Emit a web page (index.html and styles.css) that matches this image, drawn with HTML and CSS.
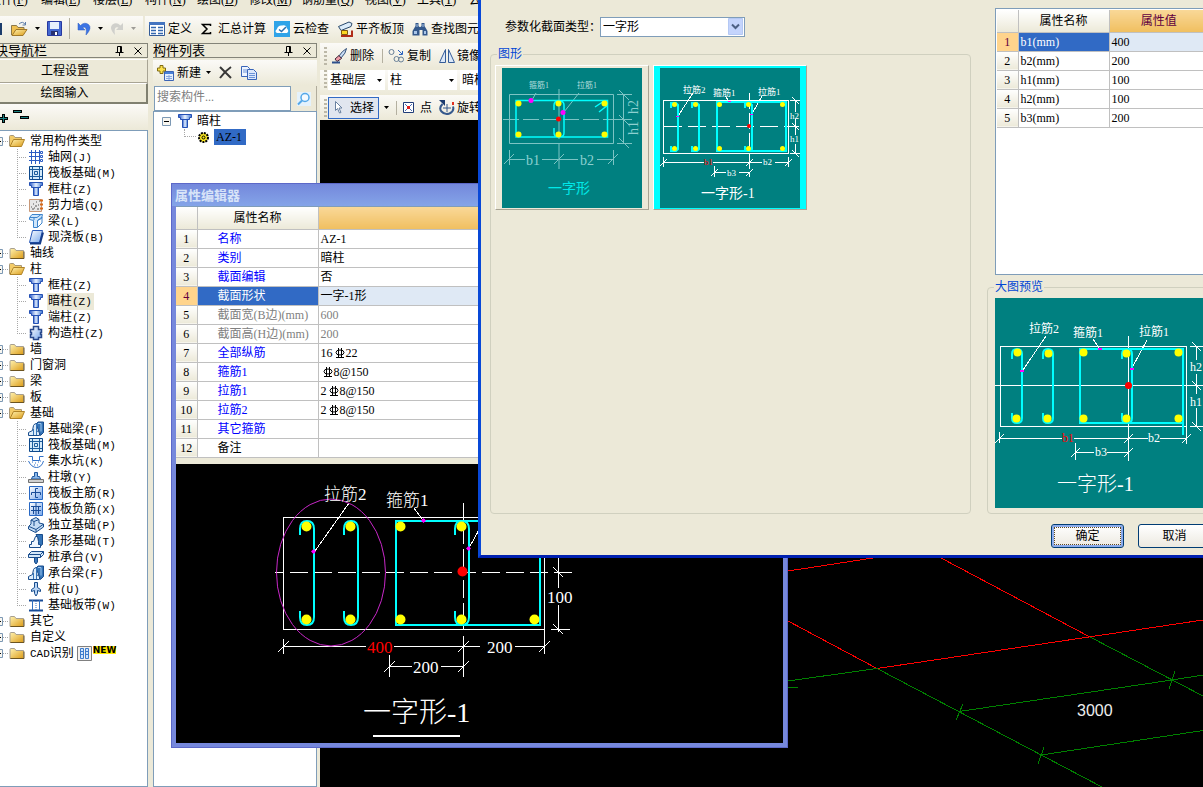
FILE: index.html
```html
<!DOCTYPE html>
<html lang="zh-CN">
<head>
<meta charset="utf-8">
<title>钢筋算量</title>
<link rel="stylesheet" href="styles.css">
</head>
<body>
<svg class="sprite" width="0" height="0" aria-hidden="true">
  <defs>
    <linearGradient id="gold" x1="0" y1="0" x2="1" y2="1"><stop offset="0" stop-color="#fff2b0"/><stop offset="1" stop-color="#dc9c18"/></linearGradient>
    <linearGradient id="steel" x1="0" y1="0" x2="1" y2="0"><stop offset="0" stop-color="#2456c8"/><stop offset=".5" stop-color="#e8f2ff"/><stop offset="1" stop-color="#3c74d0"/></linearGradient>
    <linearGradient id="sky" x1="0" y1="0" x2="1" y2="1"><stop offset="0" stop-color="#fff"/><stop offset="1" stop-color="#78a8ec"/></linearGradient>
  </defs>
  <symbol id="folder" viewBox="0 0 16 16"><path d="M1 4.500q0-1 1-1h3.500l1.500 2h7.500v8H1z" fill="url(#gold)" stroke="#a8a090"/><path d="M1.500 13.500h13.500v-7" fill="none" stroke="#6c5420"/></symbol>
  <symbol id="folder-open" viewBox="0 0 16 16"><path d="M.5 13V3.500q0-1 1-1h3l1.500 2h6.500v2" fill="#f4cc68" stroke="#a89878"/><path d="M1 13.500 4.500 6.500h11L12.500 13.500z" fill="url(#gold)" stroke="#b08428"/></symbol>
  <symbol id="col" viewBox="0 0 16 16"><path d="M1.500 1.500h13v3h-2v2h-9v-2h-2z" fill="url(#steel)" stroke="#2450b4"/><path d="M5.500 6.500h5v8h-5z" fill="url(#steel)" stroke="#2450b4"/></symbol>
  <symbol id="grid" viewBox="0 0 16 16"><path d="M3.500 1v14M7.500 1v14M11.500 1v14M1 3.500h14M1 7.500h14M1 11.500h14" stroke="#2c5cc4" fill="none"/><path d="M12.500 2.500h2v2h-2zM12.500 6.500h2v2h-2zM12.500 10.500h2v2h-2z" fill="#fff" stroke="#2c5cc4"/></symbol>
  <symbol id="raft" viewBox="0 0 16 16"><path d="M1.500 1.500h13v13h-13z" fill="#d4eafa" stroke="#0c488c"/><path d="M4.500 4.500h7v7h-7zM4.500 2v12M11.500 2v12M2 4.500h12M2 11.500h12M6.500 6.500h3v3h-3z" fill="none" stroke="#1c5c9c"/></symbol>
  <symbol id="wall" viewBox="0 0 16 16"><path d="M1.500 2.500h12v12h-12z" fill="#e8e8e8" stroke="#c89878"/><path d="M3 10h1M5 7h1M8 5h1M7 9h2M4 12h2M9 12h2M10 8h1M11 4h1M6 11h1" stroke="#555"/><path d="M12 3.500h3M12 7.500h3M12 11.500h3" stroke="#d86818" stroke-width="2"/></symbol>
  <symbol id="beam" viewBox="0 0 16 16"><path d="M1.500 4.500 4 1.500h10.500l-1 4-4 2v7h-4v-7l-4-1z" fill="#cfe6fb" stroke="#3c84cc"/><path d="M9.500 7.500 14 4v6l-4 4M2 4.500h7l4-3M6 4v3" fill="none" stroke="#3c84cc"/></symbol>
  <symbol id="slab" viewBox="0 0 16 16"><path d="M4.500 1.500h10l-3 12h-10z" fill="url(#sky)" stroke="#2858b8"/><path d="M2 14.500h10l3-11" fill="none" stroke="#143c88" stroke-width="2"/></symbol>
  <symbol id="struct" viewBox="0 0 16 16"><path d="M5.500 1.500h5v3h3v3h-1v2h1v3h-3v2h-5v-2h-3v-3h1v-2h-1v-3h3z" fill="url(#sky)" stroke="#28488c" stroke-width="1.500"/></symbol>
  <symbol id="fbeam" viewBox="0 0 16 16"><path d="M8 3l2-2h5.500v10.500l-3 3z" fill="#3474b8" stroke="#184c8c"/><path d="M10 2.500h3v8" fill="none" stroke="#9cc4ec"/><path d="M.5 14.500v-3l4-2 1-5q1-2 3-2v7l3 2v3z" fill="#dcecfa" stroke="#184c8c"/><path d="M5.500 14V8M8.500 14V3" stroke="#3474b8"/></symbol>
  <symbol id="pit" viewBox="0 0 16 16"><path d="M.5 3.500h4v4h7v-4h4M.5 8q3 6.500 8 6.500t7-6.500" fill="none" stroke="#3070c8"/><path d="M4 9h1M7 10h1M10 9h1M6 12h1M9 12h1M12 8h1" stroke="#3070c8"/></symbol>
  <symbol id="pier" viewBox="0 0 16 16"><path d="M6.500 3.500h3v4h2l1 2.500h-9l1-2.500h2z" fill="#8cb8e8" stroke="#2058a0"/><path d="M.5 10.500h15v3H.5z" fill="#d0d0d0" stroke="#707070"/></symbol>
  <symbol id="rmain" viewBox="0 0 16 16"><path d="M1.500 1.500h13v13h-13z" fill="url(#sky)" stroke="#2868c4"/><path d="M3.500 10V7.500h9V10M10 3.500H7.500v9H10" fill="none" stroke="#184c98"/></symbol>
  <symbol id="rneg" viewBox="0 0 16 16"><path d="M1.500 1.500h13v13h-13z" fill="url(#sky)" stroke="#2868c4"/><path d="M8 2v12M3 5.500h10M3 9.500h10M5.500 5v8M10.500 5v8" fill="none" stroke="#184c98"/></symbol>
  <symbol id="indep" viewBox="0 0 16 16"><path d="M.5 9.500 3 7V3l5-2.500 3 2V6l4.500 1v3l-8 5.500-7-3.500z" fill="#c4dcf4" stroke="#184c8c"/><path d="M1 9.500l7 3 7-5M3 3l3 1.500 5-2M6 4.500V9M8 12.500v3" fill="none" stroke="#184c8c"/></symbol>
  <symbol id="strip" viewBox="0 0 16 16"><path d="M8 1.500h6.500v10l-4 3V7z" fill="#3474b8" stroke="#184c8c"/><path d="M1.500 14.500v-3h2v-3h2l2-5h2l1 5v3h2v3z" fill="#eef6ff" stroke="#184c8c"/></symbol>
  <symbol id="cap" viewBox="0 0 16 16"><path d="M6.500 8h3v5L8 15l-1.500-2z" fill="#3c78bc" stroke="#184c8c"/><path d="M.5 8.500v-3l3-3h12v3l-3 3z" fill="#d4e8fa" stroke="#184c8c"/><path d="M.5 5.500h12l3-3M12.500 5.500v3" fill="none" stroke="#184c8c"/></symbol>
  <symbol id="pile" viewBox="0 0 16 16"><path d="M6.500 1.500h3v5l3 2v2l-3-1v3L8 15l-1.500-2.500v-3l-3 1v-2l3-2z" fill="#b8d4f4" stroke="#184c8c"/></symbol>
  <symbol id="band" viewBox="0 0 16 16"><path d="M1 3.500h14M1 13.500h14" stroke="#184c98" stroke-width="2"/><path d="M4.500 3v10M11.500 3v10" stroke="#3070c0"/><path d="M8 4v9" stroke="#3070c0" stroke-dasharray="1 1"/></symbol>
  <symbol id="drop" viewBox="0 0 5 3"><path d="M0 0h5L2.500 3z" fill="#000"/></symbol>
  <symbol id="expander" viewBox="0 0 9 9"><path d="M.5.5h8v8h-8z" fill="#f8f6f0" stroke="#7c98b4"/><path d="M2 4.500h5" stroke="#000"/></symbol>
  <symbol id="pin" viewBox="0 0 9 10"><path d="M2.500 6V.5h4V6M5.500 1v5M.5 6.500h8M4.500 7v3" fill="none" stroke="#000"/></symbol>
  <symbol id="close" viewBox="0 0 8 8"><path d="M.5.5l7 7M7.500.5l-7 7" stroke="#000"/></symbol>
  <symbol id="rebar" viewBox="0 0 12 12"><ellipse cx="6" cy="5.500" rx="4" ry="2.500" fill="none" stroke="#000"/><path d="M4.500 1v9M7.500 1v9M2 10.500h8" fill="none" stroke="#000"/></symbol>
</svg>

<div class="app">
  <nav class="menubar" aria-label="菜单">
    <a href="#">文件(<u>F</u>)</a><a href="#">编辑(<u>E</u>)</a><a href="#">楼层(<u>L</u>)</a><a href="#">构件(<u>N</u>)</a><a href="#">绘图(<u>D</u>)</a><a href="#">修改(<u>M</u>)</a><a href="#" class="wide">钢筋量(<u>Q</u>)</a><a href="#">视图(<u>V</u>)</a><a href="#">工具(<u>T</u>)</a><a href="#">云应用(<u>Y</u>)</a>
  </nav>

  <div class="topbars">
    <div class="bar file-bar">
      <svg class="sliver" width="2" height="12"><path d="M0 0h2v12H0z" fill="#1c3c6c"/></svg>
      <button class="tool" aria-label="打开"><svg width="17" height="16"><path d="M.5 14V4.500h5l1.500 2h6V8" fill="#f0c050" stroke="#8c7848"/><path d="M1 14.500 5 8.500h11L12 14.500z" fill="url(#gold)" stroke="#a07828"/><path d="M8 3q4-3.500 6 .5M14.500 1v3h-3" fill="none" stroke="#5c7ca8"/></svg></button>
      <svg class="arrow" width="5" height="3"><use href="#drop"/></svg>
      <button class="tool" aria-label="保存"><svg width="15" height="15"><path d="M.5.5h14v14h-14z" fill="#4468d0" stroke="#2838a0"/><path d="M3 1h9v7H3z" fill="#e8f0fc"/><path d="M4 10h7v4H4z" fill="#283070"/><path d="M8 11h2v3H8z" fill="#fff"/></svg></button>
      <i class="sep"></i>
      <button class="tool" aria-label="撤销"><svg width="14" height="14"><path d="M1 1v7h7L5.500 5.500Q10.500 3.500 9 13 15.500 6 11.500 2.500 7.500-.5 3.500 3.500z" fill="#3c74e4" stroke="#2858c0" stroke-width=".5"/></svg></button>
      <svg class="arrow" width="5" height="3"><use href="#drop"/></svg>
      <button class="tool" aria-label="重做" disabled><svg width="14" height="14"><path d="M13 1v7H6l2.500-2.500Q3.500 3.500 5 13-1.500 6 2.500 2.500q4-3 8 1z" fill="#d0d0cc"/></svg></button>
      <svg class="arrow dim-arrow" width="5" height="3"><use href="#drop"/></svg>
    </div>
    <div class="bar main-bar">
      <button class="tool"><svg width="16" height="14"><path d="M.5.5h15v13H.5z" fill="#fff" stroke="#345c98"/><path d="M0 0h16v3H0z" fill="#4474c0"/><path d="M2 5.500h5M2 8.500h5M2 11.500h5M9 5.500h5M9 8.500h5M9 11.500h5" stroke="#3468b0" stroke-width="1.500"/></svg>定义</button>
      <button class="tool"><svg width="13" height="12"><path d="M10.500 3V1.500h-8L7 6 2.500 10.500h8V9" fill="none" stroke="#000" stroke-width="1.500"/></svg>汇总计算</button>
      <button class="tool"><svg width="16" height="16"><path d="M0 0h16v16H0z" fill="#30a4e8"/><path d="M3 12Q0 10.500 3 8q1-4 5-3.500Q12 3 13 7.500q2.500 2.500 0 4.500z" fill="#fff"/><path d="M5 8.500l2.500 2L12 6" fill="none" stroke="#2870b0" stroke-width="1.500"/></svg>云检查</button>
      <button class="tool"><svg width="16" height="16"><path d="M1.500 5.500 12 1l3 1.500-1 3-10 4z" fill="#dcecfa" stroke="#28486c"/><path d="M4.500 9.500h6v4h-6z" fill="#fcd820" stroke="#805810"/><path d="M4 15h11V9.500" fill="none" stroke="#b02c18" stroke-width="2"/></svg>平齐板顶</button>
      <button class="tool"><svg width="16" height="14"><path d="M3.500 1h3v3l1 1h1l1-1V1h3v3l3 5v4.500h-5V8h-3v5.500h-7V9l3-5z" fill="#34588c"/><path d="M2 9h3v3H2zM12 9h2v3h-2zM4.500 2h1v3h-1zM10.500 2h1v3h-1z" fill="#a8c4e8"/></svg>查找图元</button>
    </div>
  </div>

  <div class="work">
    <aside class="nav">
      <header class="cap"><span class="nav-title">模块导航栏</span><svg width="9" height="10"><use href="#pin"/></svg><svg width="8" height="8"><use href="#close"/></svg></header>
      <button class="stack">工程设置</button>
      <button class="stack sunk">绘图输入</button>
      <div class="fold"><svg width="32" height="14" shape-rendering="crispEdges"><path d="M0 7h4V4h2v3h3v2H6v3H4V9H0z" fill="#188080" stroke="#000"/><path d="M15.500.5h8v2h-8zM22.500 6.500h8v2h-8z" fill="#188080" stroke="#000"/></svg></div>
      <ul class="tree">
        <li><div class="row"><svg class="ex"><use href="#expander"/></svg><i></i><svg class="ic"><use href="#folder-open"/></svg><span>常用构件类型</span></div>
          <ul>
            <li><svg class="ic"><use href="#grid"/></svg><span>轴网<kbd>(J)</kbd></span></li>
            <li><svg class="ic"><use href="#raft"/></svg><span>筏板基础<kbd>(M)</kbd></span></li>
            <li><svg class="ic"><use href="#col"/></svg><span>框柱<kbd>(Z)</kbd></span></li>
            <li><svg class="ic"><use href="#wall"/></svg><span>剪力墙<kbd>(Q)</kbd></span></li>
            <li><svg class="ic"><use href="#beam"/></svg><span>梁<kbd>(L)</kbd></span></li>
            <li><svg class="ic"><use href="#slab"/></svg><span>现浇板<kbd>(B)</kbd></span></li>
          </ul></li>
        <li><div class="row"><svg class="ex"><use href="#expander"/></svg><i></i><svg class="ic"><use href="#folder"/></svg><span>轴线</span></div></li>
        <li><div class="row"><svg class="ex"><use href="#expander"/></svg><i></i><svg class="ic"><use href="#folder-open"/></svg><span>柱</span></div>
          <ul>
            <li><svg class="ic"><use href="#col"/></svg><span>框柱<kbd>(Z)</kbd></span></li>
            <li><svg class="ic"><use href="#col"/></svg><span class="on">暗柱<kbd>(Z)</kbd></span></li>
            <li><svg class="ic"><use href="#col"/></svg><span>端柱<kbd>(Z)</kbd></span></li>
            <li><svg class="ic"><use href="#struct"/></svg><span>构造柱<kbd>(Z)</kbd></span></li>
          </ul></li>
        <li><div class="row"><svg class="ex"><use href="#expander"/></svg><i></i><svg class="ic"><use href="#folder"/></svg><span>墙</span></div></li>
        <li><div class="row"><svg class="ex"><use href="#expander"/></svg><i></i><svg class="ic"><use href="#folder"/></svg><span>门窗洞</span></div></li>
        <li><div class="row"><svg class="ex"><use href="#expander"/></svg><i></i><svg class="ic"><use href="#folder"/></svg><span>梁</span></div></li>
        <li><div class="row"><svg class="ex"><use href="#expander"/></svg><i></i><svg class="ic"><use href="#folder"/></svg><span>板</span></div></li>
        <li><div class="row"><svg class="ex"><use href="#expander"/></svg><i></i><svg class="ic"><use href="#folder-open"/></svg><span>基础</span></div>
          <ul>
            <li><svg class="ic"><use href="#fbeam"/></svg><span>基础梁<kbd>(F)</kbd></span></li>
            <li><svg class="ic"><use href="#raft"/></svg><span>筏板基础<kbd>(M)</kbd></span></li>
            <li><svg class="ic"><use href="#pit"/></svg><span>集水坑<kbd>(K)</kbd></span></li>
            <li><svg class="ic"><use href="#pier"/></svg><span>柱墩<kbd>(Y)</kbd></span></li>
            <li><svg class="ic"><use href="#rmain"/></svg><span>筏板主筋<kbd>(R)</kbd></span></li>
            <li><svg class="ic"><use href="#rneg"/></svg><span>筏板负筋<kbd>(X)</kbd></span></li>
            <li><svg class="ic"><use href="#indep"/></svg><span>独立基础<kbd>(P)</kbd></span></li>
            <li><svg class="ic"><use href="#strip"/></svg><span>条形基础<kbd>(T)</kbd></span></li>
            <li><svg class="ic"><use href="#cap"/></svg><span>桩承台<kbd>(V)</kbd></span></li>
            <li><svg class="ic"><use href="#fbeam"/></svg><span>承台梁<kbd>(F)</kbd></span></li>
            <li><svg class="ic"><use href="#pile"/></svg><span>桩<kbd>(U)</kbd></span></li>
            <li><svg class="ic"><use href="#band"/></svg><span>基础板带<kbd>(W)</kbd></span></li>
          </ul></li>
        <li><div class="row"><svg class="ex"><use href="#expander"/></svg><i></i><svg class="ic"><use href="#folder"/></svg><span>其它</span></div></li>
        <li><div class="row"><svg class="ex"><use href="#expander"/></svg><i></i><svg class="ic"><use href="#folder"/></svg><span>自定义</span></div></li>
        <li><div class="row"><svg class="ex"><use href="#expander"/></svg><i></i><svg class="ic"><use href="#folder"/></svg><span><kbd>CAD</kbd>识别</span><svg class="cad" width="15" height="15"><path d="M.5.5h14v14H.5z" fill="#f4f0ec" stroke="#808080"/><path d="M3.500 2.500h3v10h-3zM8.500 2.500h3v10h-3zM3.500 5.500h3M3.500 8.500h3M8.500 5.500h3M8.500 8.500h3" fill="#d0e4fc" stroke="#3c7ccc"/></svg><b class="new">NEW</b></div></li>
      </ul>
    </aside>

    <aside class="list">
      <header class="cap"><span>构件列表</span><svg width="9" height="10"><use href="#pin"/></svg><svg width="8" height="8"><use href="#close"/></svg></header>
      <div class="bar list-bar">
        <button class="tool"><svg width="17" height="16"><path d="M7.500 6.500h9v9h-9z" fill="#e4eefc" stroke="#3c64b4"/><path d="M8 7h8v2H8z" fill="#4880d8"/><path d="M9 11.500h6M9 13.500h6M12 10v5" stroke="#88a8e0"/><path d="M3 .5h3V3h2.500v3H6v2.500H3V6H.5V3H3z" fill="#fce04c" stroke="#806c10"/></svg>新建</button>
        <svg class="arrow" width="5" height="3"><use href="#drop"/></svg>
        <button class="tool del" aria-label="删除构件"><svg width="13" height="13"><path d="M1 1l11 11M12 1Q6 5 1 12" stroke="#383838" stroke-width="2" fill="none"/></svg></button>
        <button class="tool" aria-label="复制构件"><svg width="16" height="14"><path d="M.5.500h6l2 2v8h-8z" fill="#eef4ff" stroke="#3864b8"/><path d="M6.500 3.500h6l3 3v7h-9z" fill="#dce8fc" stroke="#3864b8"/><path d="M2 4h4M2 6h4M8 7.500h6M8 9.500h6M8 11.500h6" stroke="#6c94d8"/></svg></button>
      </div>
      <div class="search">
        <input type="text" placeholder="搜索构件..." aria-label="搜索构件">
        <button aria-label="搜索"><svg width="14" height="14"><path d="M0 0h14v14H0z" fill="#e4f2fc"/><circle cx="8" cy="5.500" r="4" fill="#f4faff" stroke="#54a8e8" stroke-width="1.500"/><path d="M5 8.500 1 12.500" stroke="#54a8e8" stroke-width="2"/></svg></button>
      </div>
      <div class="parts">
        <div class="part"><svg class="ex"><use href="#expander"/></svg><svg class="ic"><use href="#col"/></svg><span>暗柱</span></div>
        <div class="part leaf"><i></i><svg width="13" height="13"><circle cx="6.500" cy="6.500" r="4.500" fill="#fce820" stroke="#000" stroke-width="2" stroke-dasharray="2 1"/><circle cx="6.500" cy="6.500" r="1.500" fill="none" stroke="#000"/></svg><span class="sel">AZ-1</span></div>
      </div>
    </aside>

    <main class="stage">
      <div class="bar edit-bar"><i class="grip"></i>
        <button class="tool"><svg width="16" height="16"><path d="M14.500.5Q10 3 7 8l2 2q5-5 5.500-9.500z" fill="#c8dcf4" stroke="#345078"/><path d="M7 7.500 3 11l2 2.500 4.500-3z" fill="#f09ca8" stroke="#402838"/><path d="M0 14.500h8" stroke="#2c508c" stroke-width="2"/></svg>删除</button><i class="sep"></i>
        <button class="tool"><svg width="17" height="16"><circle cx="3.500" cy="4" r="2.500" fill="none" stroke="#688098"/><circle cx="8.500" cy="11" r="2.500" fill="none" stroke="#688098"/><circle cx="13" cy="11.500" r="2.500" fill="none" stroke="#688098"/><path d="M10 2l4 4M14.500 3v3.500H11" fill="none" stroke="#2c64c0"/></svg>复制</button>
        <button class="tool"><svg width="16" height="14"><path d="M6.500.5v13h-6zM9.500.5v13h6z" fill="#dce8f8" stroke="#345c98"/></svg>镜像</button>
      </div>
      <div class="bar combo-bar"><i class="grip"></i>
        <label class="combo floor"><select aria-label="楼层"><option>基础层</option></select><svg width="5" height="3"><use href="#drop"/></svg></label>
        <label class="combo kind"><select aria-label="构件类型"><option>柱</option></select><svg width="5" height="3"><use href="#drop"/></svg></label>
        <label class="combo kind"><select aria-label="构件"><option>暗柱</option></select><svg width="5" height="3"><use href="#drop"/></svg></label>
      </div>
      <div class="bar draw-bar"><i class="grip"></i>
        <button class="tool picked"><svg width="10" height="13"><path d="M1.500.5v9l2-2 2 4.500 1.500-.5-2-4.500H8z" fill="#fff" stroke="#6880a0"/></svg>选择</button>
        <svg class="arrow" width="5" height="3"><use href="#drop"/></svg><i class="sep"></i>
        <button class="tool"><svg width="12" height="12"><path d="M.5.5h10v10H.5z" fill="#fff" stroke="#203c78"/><path d="M2 2l7 7M9 2l-7 7" stroke="#4c6cb0"/><path d="M4 4h3v3H4z" fill="#e02020"/></svg>点</button>
        <button class="tool"><svg width="16" height="15"><path d="M3.500 4Q-.5 8 2.500 11.500t8 2Q15.500 11 14 6.500" fill="none" stroke="#34588c" stroke-width="2"/><path d="M0 0h6v6z" fill="#1c3c70"/><path d="M8 4v8M4 8h8" stroke="#34588c"/><path d="M13 2h2v3h-2z" fill="#e03020"/></svg>旋转</button>
      </div>
      <svg class="field" role="img" aria-label="轴网绘图区">
        <g transform="translate(-320 -120)" fill="none" shape-rendering="crispEdges">
          <path stroke="#f00" d="M788 571 873 558M941 558 1090 637M788 621 877 668.500 1203 620"/>
          <path stroke="#008000" d="M788 681 877 668.500 1102 787M788 687l10 1M1090 637l113 59M959 711.500 1172 680l31-5M1041 755l162-24.500M963 704l-7 16M1044 747l-6 17M1175 671l-6 18"/>
          <text x="1077" y="716" class="span-label">3000</text>
        </g>
      </svg>
    </main>
  </div>

  <section class="editor" aria-label="属性编辑器">
    <h2>属性编辑器</h2>
    <div class="editor-body">
      <table class="props">
        <thead><tr><th></th><th class="name">属性名称</th><th class="val hot"></th></tr></thead>
        <tbody>
          <tr><th>1</th><td class="key">名称</td><td>AZ-1</td></tr>
          <tr><th>2</th><td class="key">类别</td><td>暗柱</td></tr>
          <tr><th>3</th><td class="key">截面编辑</td><td>否</td></tr>
          <tr class="cur"><th>4</th><td class="key">截面形状</td><td>一字-1形</td></tr>
          <tr class="off"><th>5</th><td class="key">截面宽(B边)(mm)</td><td>600</td></tr>
          <tr class="off"><th>6</th><td class="key">截面高(H边)(mm)</td><td>200</td></tr>
          <tr><th>7</th><td class="key">全部纵筋</td><td>16<svg class="rb"><use href="#rebar"/></svg>22</td></tr>
          <tr><th>8</th><td class="key">箍筋1</td><td><svg class="rb"><use href="#rebar"/></svg>8@150</td></tr>
          <tr><th>9</th><td class="key">拉筋1</td><td>2<svg class="rb"><use href="#rebar"/></svg>8@150</td></tr>
          <tr><th>10</th><td class="key">拉筋2</td><td>2<svg class="rb"><use href="#rebar"/></svg>8@150</td></tr>
          <tr><th>11</th><td class="key">其它箍筋</td><td></td></tr>
          <tr><th>12</th><td class="key plain">备注</td><td></td></tr>
        </tbody>
      </table>
      <svg class="section" role="img" aria-label="一字形-1 截面">
        <g transform="translate(-176 -464)">
          <g fill="none" stroke="#fff" shape-rendering="crispEdges">
            <path d="M283.500 517.500h261v112h-261zM544.500 629v25"/>
            <path d="M275 572.500h9M290 572.500H572" stroke-dasharray="18 6"/>
            <path d="M463.500 503v67M463.500 580v50" stroke-dasharray="18 5"/>
            <path d="M463.500 636v41M283.500 639v15M283 646.500h83M394 646.500h86M515 646.500h29M389.500 655v22M389 666.500h23M441 666.500h22M278 652l11-11M458 652l11-11M539 652l11-11M384 672l11-11M458 672l11-11"/>
            <path d="M558.500 550v38M558.500 605v27M551 629.500h19M553 567l10 10M553 624l10 10M349 503l-34 48M414 508l9 12M469 548l11-20"/>
            <path d="M373 736h87" stroke-width="2"/>
          </g>
          <g fill="none" stroke="#0ff" stroke-width="2">
            <path d="M396 521h144v104H396z"/>
            <path id="tie" d="M300 535v-6q0-8 7-8t7 8v88q0 8-7 8t-7-8v-6"/>
            <use href="#tie" x="44"/><use href="#tie" x="155"/>
          </g>
          <ellipse cx="331" cy="572.500" rx="54.500" ry="73.500" fill="none" stroke="#c828c8"/>
          <g fill="#ff0"><circle cx="306.500" cy="526.500" r="5"/><circle cx="350.500" cy="526.500" r="5"/><circle cx="400.500" cy="526.500" r="5"/><circle cx="461.500" cy="526.500" r="5"/><circle cx="306.500" cy="619.500" r="5"/><circle cx="350.500" cy="619.500" r="5"/><circle cx="400.500" cy="619.500" r="5"/><circle cx="461.500" cy="619.500" r="5"/><circle cx="534.500" cy="619.500" r="5"/></g>
          <circle cx="462.500" cy="571.500" r="5" fill="#f00"/>
          <path d="M311 551.500l2.500-2.500 2.500 2.500-2.500 2.500zM421 520.500l2.500-2.500 2.500 2.500-2.500 2.500zM466 548.500l2.500-2.500 2.500 2.500-2.500 2.500z" fill="#f0f"/>
          <g class="dim big"><text x="324" y="500">拉筋2</text><text x="386" y="506">箍筋1</text><text x="367" y="653" class="warn">400</text><text x="487" y="653">200</text><text x="413" y="673">200</text><text x="547" y="603">100</text></g>
          <text x="363" y="722" class="dim title">一字形-1</text>
        </g>
      </svg>
    </div>
  </section>

  <section class="dialog" role="dialog" aria-label="选择参数化图形">
    <div class="dialog-grid">
      <div class="choose">
        <div class="type"><label for="type">参数化截面类型：</label><span class="xp"><select id="type"><option>一字形</option></select><svg width="15" height="17"><path d="M.5.5h14v16H.5z" fill="#c4d4fc" stroke="#b4c8f4"/><path d="M4 6.500l3.500 3.500L11 6.500" fill="none" stroke="#4c6084" stroke-width="2"/></svg></span></div>
        <fieldset class="shapes"><legend>图形</legend>
          <button class="thumb" aria-label="一字形"><svg>
            <g transform="translate(-502 -69)">
              <g fill="none" stroke="#7cc4c4"><path d="M509.500 95.500h104v49h-104z"/><path d="M503 120.500h122" stroke-dasharray="16 4"/><path d="M559 90v50M559 144v26M509.500 151v15M613.500 151v15M504 165l10-10M554 165l10-10M608 165l10-10M509 160.500h16M542 160.500h36M597 160.500h16"/><path d="M617 95.500h15M617 144.500h15M617 120.500h15M623.500 96v48M619 91l10 10M619 116l10 10M619 139l10 10M536 94l-4 7M579 94l-15 19"/></g>
              <path d="M516 101.500h91.500V138H516zM554 111v-5q0-4 5-4t5 4v28q0 4-5 4t-5-4v-5M595 108l9-6M599 113l9-7" fill="none" stroke="#0ff" stroke-width="1.500"/>
              <g fill="#ff0"><circle cx="518.500" cy="104.500" r="3"/><circle cx="558.500" cy="104.500" r="3"/><circle cx="604.500" cy="104.500" r="3"/><circle cx="518.500" cy="135.500" r="3"/><circle cx="558.500" cy="135.500" r="3"/><circle cx="604.500" cy="135.500" r="3"/></g>
              <circle cx="531" cy="101.500" r="2.500" fill="#f0f"/><circle cx="563" cy="113.500" r="2.500" fill="#f0f"/><circle cx="558.500" cy="120" r="2.500" fill="#f00"/>
              <g class="dim tiny"><text x="529" y="89">箍筋1</text><text x="577" y="89">拉筋1</text></g>
              <g class="dim pale"><text x="526" y="166">b1</text><text x="580" y="166">b2</text><text transform="translate(638 115) rotate(-90)">h2</text><text transform="translate(638 136) rotate(-90)">h1</text></g>
              <text x="548" y="194" class="dim cyan">一字形</text>
            </g></svg></button>
          <button class="thumb chosen" aria-label="一字形-1"><svg>
            <g transform="translate(-660 -69)">
              <g fill="none" stroke="#fff" shape-rendering="crispEdges"><path d="M663.500 101.500h125v53h-125z"/><path d="M664 127.500h135" stroke-dasharray="18 6"/><path d="M749.500 94v84" stroke-dasharray="16 4"/><path d="M663.500 158v10M788.500 158v10M714.500 167v11M663 163.500h41M713 163.500h49M775 163.500h13M714 173.500h12M739 173.500h10M660 167l7-7M746 167l7-7M785 167l7-7M711 177l7-7M746 177l7-7"/><path d="M790 101.500h10M790 154.500h10M795.500 102v11M795.500 120v16M795.500 145v10M792 98l7 7M792 124l7 7M792 151l7 7M693 94l-15 23M725 97l4 5M762 97l-10 18"/></g>
              <g fill="none" stroke="#0ff" stroke-width="2"><path d="M717 103h69v49h-69z"/><path id="tie-s" d="M671 109v-5h5l2 2v44l-2 2h-5v-5"/><use href="#tie-s" x="21"/><use href="#tie-s" x="74"/></g>
              <g fill="#ff0"><circle cx="674.500" cy="105.500" r="2.500"/><circle cx="695.500" cy="105.500" r="2.500"/><circle cx="719.500" cy="105.500" r="2.500"/><circle cx="748.500" cy="105.500" r="2.500"/><circle cx="782.500" cy="105.500" r="2.500"/><circle cx="674.500" cy="149.500" r="2.500"/><circle cx="695.500" cy="149.500" r="2.500"/><circle cx="719.500" cy="149.500" r="2.500"/><circle cx="748.500" cy="149.500" r="2.500"/><circle cx="782.500" cy="149.500" r="2.500"/></g>
              <circle cx="749" cy="127" r="2" fill="#f00"/><path d="M676 117h3v1h-3zM728 102h3v1h-3zM750 115h3v1h-3z" fill="#f0f"/>
              <g class="dim small"><text x="683" y="94">拉筋2</text><text x="713" y="97">箍筋1</text><text x="758" y="96">拉筋1</text><text x="704" y="166" class="warn">b1</text><text x="763" y="166">b2</text><text x="727" y="177">b3</text><text x="790" y="120">h2</text><text x="790" y="143">h1</text></g>
              <text x="701" y="199" class="dim mid">一字形-1</text>
            </g></svg></button>
        </fieldset>
      </div>
      <div class="detail">
        <div class="values">
          <table class="props">
            <thead><tr><th></th><th class="name">属性名称</th><th class="val hot">属性值</th></tr></thead>
            <tbody>
              <tr class="cur"><th>1</th><td>b1(mm)</td><td>400</td></tr>
              <tr><th>2</th><td>b2(mm)</td><td>200</td></tr>
              <tr><th>3</th><td>h1(mm)</td><td>100</td></tr>
              <tr><th>4</th><td>h2(mm)</td><td>100</td></tr>
              <tr><th>5</th><td>b3(mm)</td><td>200</td></tr>
            </tbody>
          </table>
        </div>
        <fieldset class="preview"><legend>大图预览</legend>
          <svg role="img" aria-label="一字形-1 大图">
            <g transform="translate(-995 -298)">
              <g fill="none" stroke="#fff" shape-rendering="crispEdges">
                <path d="M1000.500 346.500h186v80h-186zM995 385.500h215M1128.500 336v125M1186.500 426v18M999.500 432v11M1075.500 443v17M999 438.500h63M1074 438.500h74M1160 438.500h27M1075 452.500h19M1107 452.500h22"/>
                <path d="M995 443l9-9M1124 443l9-9M1182 443l9-9M1071 457l9-9M1124 457l9-9M1190 346.500h20M1190 426.500h20M1196.500 346v14M1196.500 374v20M1196.500 408v18M1192 342l9 9M1192 381l9 9M1192 422l9 9M1046 336l-23 34M1093 339l6 9M1147 340l-15 28"/>
              </g>
              <g fill="none" stroke="#0ff" stroke-width="2"><path d="M1080 349h103v74h-103zM1183 420v15"/><path id="tie-m" d="M1012 359v-5q0-5 5-5t5 5v64q0 5-5 5t-5-5v-5"/><use href="#tie-m" x="31"/><use href="#tie-m" x="110"/></g>
              <g fill="#ff0"><circle cx="1017.500" cy="352.500" r="4"/><circle cx="1048.500" cy="353.500" r="4"/><circle cx="1083.500" cy="352.500" r="4"/><circle cx="1126.500" cy="353.500" r="4"/><circle cx="1178.500" cy="352.500" r="4"/><circle cx="1016.500" cy="418.500" r="4"/><circle cx="1047.500" cy="418.500" r="4"/><circle cx="1083.500" cy="418.500" r="4"/><circle cx="1126.500" cy="418.500" r="4"/><circle cx="1178.500" cy="418.500" r="4"/></g>
              <circle cx="1128.500" cy="385.500" r="3.500" fill="#f00"/><path d="M1020 370h4v2h-4zM1098 348h4v2h-4zM1130 368h4v2h-4z" fill="#f0f"/>
              <g class="dim norm"><text x="1029" y="333">拉筋2</text><text x="1073" y="337">箍筋1</text><text x="1139" y="336">拉筋1</text><text x="1062" y="442" class="warn">b1</text><text x="1148" y="442">b2</text><text x="1095" y="456">b3</text><text x="1190" y="371">h2</text><text x="1190" y="406">h1</text></g>
              <text x="1057" y="491" class="dim head">一字形-1</text>
            </g></svg>
        </fieldset>
      </div>
    </div>
    <div class="actions"><button class="xpb default">确定</button><button class="xpb">取消</button></div>
  </section>
</div>
</body>
</html>
```
FILE: styles.css
```css
* { box-sizing: border-box; }
html, body { height: 100%; }
body {
  margin: 0;
  overflow: hidden;
  font: 12px/16px "Liberation Serif", "Noto Sans CJK SC", sans-serif;
  color: #000;
  background: #ece9d8;
}
button, input, select { font: inherit; color: inherit; }
button { background: none; border: 0; padding: 0; }
svg { display: block; flex: none; }
ul { list-style: none; margin: 0; padding: 0; }
.sprite { position: absolute; }

.app { position: relative; height: 100vh; display: flex; flex-direction: column; overflow: hidden; }

/* menu */
.menubar { display: flex; height: 16px; margin-left: -11px; overflow: hidden; white-space: nowrap; }
.menubar a { flex: none; width: 52px; margin-top: -8px; color: #000; text-decoration: none; }
.menubar .wide { width: 64px; }

/* toolbars */
.topbars { display: flex; gap: 2px; height: 25px; margin-bottom: 2px; }
.bar { display: flex; align-items: center; background: linear-gradient(#fbfaf7, #ece9d8); white-space: nowrap; overflow: hidden; }
.tool { display: flex; align-items: center; gap: 4px; flex: none; }
.file-bar { width: 143px; gap: 7px; }
.file-bar .sliver { margin-right: 2px; }
.file-bar .sep { height: 21px; }
.dim-arrow { opacity: .35; }
.main-bar { flex: 1; padding-left: 4px; gap: 8px; }
.main-bar .tool { gap: 3px; }
.main-bar .tool:nth-child(2) { gap: 5px; }
.sep { flex: none; width: 1px; height: 14px; background: #b4b0a0; }
.grip { flex: none; width: 3px; height: 18px; background: repeating-linear-gradient(#bcb8a8 0 2px, transparent 2px 4px); }

/* work area */
.work { flex: 1; min-height: 0; display: flex; }
.nav { flex: none; width: 148px; margin-right: 5px; display: flex; flex-direction: column; }
.list { flex: none; width: 164px; margin-right: 3px; display: flex; flex-direction: column; }
.stage { flex: 1; min-width: 0; display: flex; flex-direction: column; }

.cap { display: flex; align-items: center; gap: 10px; height: 15px; padding-right: 5px; border: 1px solid #848478; border-left: 0; font-size: 13px; line-height: 13px; overflow: hidden; white-space: nowrap; }
.cap span { flex: 1; min-width: 0; }
.nav-title { margin-left: -18px; }
.stack { flex: none; height: 24px; margin-top: 1px; padding-right: 17px; border: 1px solid #a8a494; border-top-color: #fff; border-width: 1px 1px 1px 0; }
.stack.sunk { height: 21px; border-right: 2px solid #808070; border-bottom: 2px solid #808070; margin-top: 0; }
.fold { flex: none; height: 26px; display: flex; align-items: center; background: linear-gradient(#fbfaf7, #ece9d8); }
.fold svg { margin-left: -2px; }

.tree { flex: 1; padding: 2px 0 0; border: 1px solid #7f9db9; border-left: 0; background: #fff; overflow: hidden; white-space: nowrap; }
.tree > li { margin-left: -6px; }
.row { display: flex; align-items: center; height: 16px; }
.row i { width: 6px; height: 1px; background: repeating-linear-gradient(90deg, #a8a8a8 0 1px, transparent 1px 2px); }
.row span { margin-left: 5px; }
.row .cad { margin-left: 3px; }
.ex { width: 9px; height: 9px; }
.ic { width: 16px; height: 16px; }
.tree ul { margin-left: 23px; background: repeating-linear-gradient(#a8a8a8 0 1px, transparent 1px 2px) left top / 1px calc(100% - 8px) no-repeat; }
.tree ul li { display: flex; align-items: center; height: 16px; }
.tree ul li::before { content: ""; width: 10px; height: 1px; margin-right: 1px; background: repeating-linear-gradient(90deg, #a8a8a8 0 1px, transparent 1px 2px); }
.tree ul span { margin-left: 3px; padding: 0 2px 0 1px; }
.tree .on { background: #ece9d8; }
kbd { font: 11px/16px "Liberation Mono", monospace; }
.new { font: bold 9px/8px "DejaVu Sans", sans-serif; background: #ffe800; margin: -6px 0 0 1px; }

.list-bar { height: 25px; margin-top: 2px; padding-left: 4px; gap: 5px; }
.list-bar .tool { gap: 3px; }
.list-bar .del { margin: 0 4px 0 3px; }
.search { display: flex; height: 25px; margin-top: 1px; border-right: 1px solid #b0ac9c; }
.search input { flex: 1; min-width: 0; margin-left: 1px; padding: 0 2px 4px; border: 1px solid #7f9db9; background: #fff; outline: 0; }
.search input::placeholder { color: #808080; opacity: 1; }
.search button { width: 25px; display: flex; align-items: center; justify-content: center; }
.parts { flex: 1; border: 1px solid #7f9db9; background: #fff; padding: 1px 0 0 8px; }
.part { display: flex; align-items: center; height: 16px; }
.part .ic { margin: 0 4px 0 6px; }
.leaf { padding-left: 22px; }
.leaf i { width: 12px; height: 8px; margin: -8px 1px 0 0; border: dotted #a8a8a8; border-width: 0 0 1px 1px; }
.leaf .sel { margin-left: 4px; padding: 0 4px 0 2px; background: #316ac5; }

.edit-bar, .combo-bar, .draw-bar { flex: none; padding-left: 4px; }
.edit-bar { height: 25px; gap: 5px; }
.edit-bar .sep { margin: 0 0 0 3px; }
.edit-bar .tool { gap: 2px; }
.edit-bar .tool:last-child { margin-left: 3px; }
.combo-bar { height: 25px; margin-top: 2px; gap: 3px; align-items: flex-start; }
.combo { position: relative; flex: none; height: 20px; background: #fff; }
.combo select, .xp select { appearance: none; width: 100%; height: 100%; border: 0; padding: 0 0 0 2px; background: none; }
.combo svg { position: absolute; right: 3px; top: 9px; }
.combo.floor { width: 57px; margin-left: -2px; }
.combo.kind { width: 69px; }
.draw-bar { height: 25px; gap: 5px; }
.draw-bar .tool { gap: 5px; }
.draw-bar .tool:last-child { margin-left: 2px; gap: 2px; }
.draw-bar .tool.picked { height: 22px; margin-left: -4px; padding: 0 4px 0 5px; gap: 6px; border: 1px solid #316ac5; background: #e1e6ef; }
.draw-bar .sep { margin: 0 1px 0 2px; }
.field { flex: 1; width: 100%; min-height: 0; background: #000; }
.span-label { font: 16px "Liberation Sans", sans-serif; fill: #eee; }

/* property tables */
.props { border-collapse: collapse; table-layout: fixed; width: 100%; background: #fff; }
.props th, .props td { height: 19px; padding: 0 2px; border: solid #c0c0c0; border-width: 0 1px 1px 0; font-weight: normal; text-align: left; line-height: 16px; white-space: nowrap; }
.props tr > :last-child { border-right: 0; }
.props th { padding: 0; text-align: center; background: linear-gradient(#fff, #ece9d8); }
.props th:first-child { width: 21px; }
.props thead th { height: 22px; }
.props thead .hot { background: linear-gradient(#f9d898, #f0bf60); color: #600040; }
.props tbody .cur th { background: #ffd48c; color: #600040; }
.props .cur td { background: #dfe9f5; }
.props .cur td:nth-child(2) { background: #316ac5; color: #fff; }
.rb { display: inline-block; width: 12px; height: 12px; margin-left: 1px; vertical-align: -2px; }

/* floating property editor */
.editor { position: absolute; left: 171px; top: 183px; width: 617px; border: 1px solid #5c68c8; background: #7688dc; padding: 0 4px 4px; }
.editor h2 { margin: 0 -4px; padding: 3px 3px 0; height: 22px; font-size: 13px; line-height: 18px; font-weight: bold; color: #d8e4f8; background: linear-gradient(#7488dc, #84a4e8); }
.editor-body { background: #ece9d8; border-top: 1px solid #7f9db9; }
.editor .props .name { width: 121px; }
.editor .key { padding-left: 20px; color: #00f; }
.editor .key.plain { color: #000; }
.editor .cur .key { color: #fff; }
.editor .off td { color: #808080; }
.section { width: 100%; height: 279px; margin-top: 6px; background: #000; }

/* parametric section dialog */
.dialog { position: absolute; left: 478px; right: -20px; top: -6px; padding: 14px 5px 7px 9px; border: solid #0848d8; border-width: 0 0 3px 3px; border-bottom-color: #0020b0; background: #ece9d8; }
.dialog-grid { display: grid; grid-template-columns: minmax(0, 1fr) 231px; gap: 16px; }
.choose { display: flex; flex-direction: column; }
.type { display: flex; align-items: center; height: 38px; padding-left: 15px; white-space: nowrap; }
.type label { width: 95px; }
.xp { position: relative; width: 145px; height: 20px; border: 1px solid #7f9db9; background: #fff; }
.xp svg { position: absolute; right: 1px; top: 0; }
fieldset { margin: 0; min-width: 0; border: 1px solid #d0d0bf; border-radius: 4px; }
legend { padding: 0 1px; color: #0046d5; }
.shapes { flex: 1; padding: 3px 4px 4px; display: flex; align-items: flex-start; gap: 4px; }
.shapes legend { margin-left: 2px; }
.thumb { width: 154px; height: 145px; padding: 1px 6px; border: 1px solid; border-color: #fff #a8a494 #a8a494 #fff; }
.thumb svg { width: 140px; height: 140px; background: #008080; }
.chosen { background: #0ff; }
.values { height: 267px; margin-left: 8px; margin-right: 8px; padding: 1px; border: 1px solid #7f9db9; background: #fff; }
.detail { display: flex; flex-direction: column; gap: 4px; }
.values .props .name { width: 91px; }
.preview { padding: 3px 7px 5px; }
.preview legend { margin-left: -1px; }
.preview svg { width: 100%; height: 210px; background: #008080; }
.actions { display: flex; justify-content: flex-end; gap: 14px; margin-top: 10px; padding-right: 7px; }
.xpb { width: 73px; height: 24px; border: 1px solid #003c74; border-radius: 3px; background: linear-gradient(#fff, #ece9e0); }
.default { box-shadow: inset 0 0 0 2px #8cacec; outline: 1px dotted #604820; outline-offset: -4px; }

/* lettering in section drawings */
.dim { fill: #fff; font-family: "Liberation Serif", "Noto Sans CJK SC", sans-serif; font-weight: 400; }
.tiny { font-size: 8px; fill: #b0dcdc; }
.small { font-size: 9px; }
.norm { font-size: 12px; }
.mid, .cyan, .pale { font-size: 14px; }
.big { font-size: 17px; font-weight: 300; }
.head { font-size: 20px; font-weight: 300; }
.title { font-size: 28px; font-weight: 300; }
.pale { fill: #8cd0d0; }
.cyan { fill: #00e8e8; }
.dim .warn { fill: #f00; }
```
